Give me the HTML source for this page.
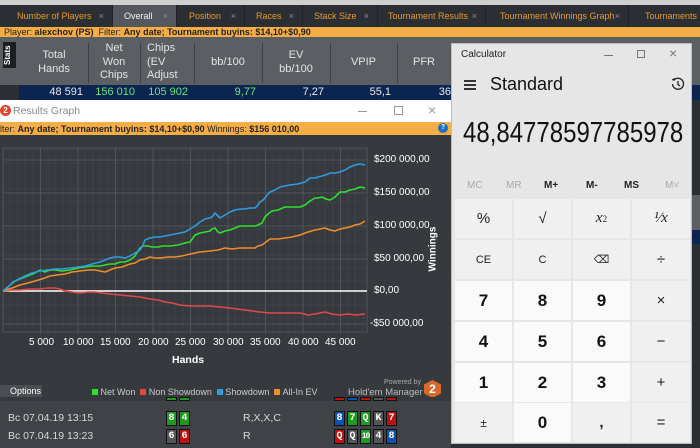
<!DOCTYPE html>
<html><head><meta charset="utf-8"><style>
*{margin:0;padding:0;box-sizing:border-box}
body{width:700px;height:448px;overflow:hidden;background:#2b2e33;font-family:"Liberation Sans",sans-serif;position:relative}
.abs{position:absolute}
.tab{position:absolute;top:5px;height:22px;color:#e59a2c;font-size:9px;line-height:22px;padding-left:12px;border-right:1px solid #1f2226;white-space:nowrap;overflow:hidden}
.tab i{font-style:normal;color:#8a8d91;position:absolute;right:8px}
.hd{position:absolute;top:42px;color:#e4e4e4;font-size:11px;text-align:center;line-height:13.5px}
.sep{position:absolute;top:43px;width:1px;height:40px;background:#3d4045}
.dv{position:absolute;top:86px;font-size:11px;color:#6be57a;text-align:right}
.yl{position:absolute;left:374px;color:#fff;font-size:10px}
.xl{position:absolute;top:337px;color:#fff;font-size:10px}
.card{position:absolute;width:11px;height:15px;font-size:10px;line-height:14px;text-align:center;color:#fff;font-family:"Liberation Mono",monospace;border:1px solid #111;font-weight:bold}
.row{position:absolute;left:8px;color:#d8d8d8;font-size:10.5px}
.k{position:absolute;height:39px;background:#f0f0f0;display:flex;align-items:center;justify-content:center;color:#222;font-size:15px}
.n{background:#fafafa;font-size:17px;font-weight:bold;color:#111}
.m{position:absolute;top:180px;font-size:10px;color:#222;font-weight:bold}
</style></head><body>
<div class="abs" style="left:0;top:0;width:700px;height:5px;background:#cfcfcf"></div>
<div class="abs" style="left:0;top:5px;width:700px;height:22px;background:#2b2e33"></div>
<div class="tab" style="left:0;width:113px;padding-left:17px">Number of Players<i>×</i></div>
<div class="tab" style="left:113px;width:64px;background:#54585d;color:#f0f0f0;padding-left:11px">Overall<i>×</i></div>
<div class="tab" style="left:177px;width:68px">Position<i>×</i></div>
<div class="tab" style="left:245px;width:58px;padding-left:11px">Races<i>×</i></div>
<div class="tab" style="left:303px;width:75px;padding-left:11px">Stack Size<i>×</i></div>
<div class="tab" style="left:378px;width:108px;padding-left:10px">Tournament Results<i>×</i></div>
<div class="tab" style="left:486px;width:143px;padding-left:14px">Tournament Winnings Graph<i>×</i></div>
<div class="tab" style="left:629px;width:80px;padding-left:16px">Tournaments</div>
<div class="abs" style="left:0;top:27px;width:700px;height:10px;background:#f5ad45"></div>
<div class="abs" style="left:4px;top:27px;font-size:9px;color:#222;line-height:10px">Player: <b>alexchov (PS)</b> &nbsp;Filter: <b>Any date; Tournament buyins: $14,10+$0,90</b></div>
<div class="abs" style="left:0;top:37px;width:700px;height:48px;background:#5b5f64"></div>
<div class="abs" style="left:3px;top:42px;width:13px;height:26px;background:#1c1e21;color:#fff;font-size:8px;writing-mode:vertical-rl;transform:rotate(180deg);text-align:center;font-weight:bold">Stats</div>
<div class="hd" style="left:20px;width:68px;top:49px">Total<br>Hands</div>
<div class="sep" style="left:88px"></div>
<div class="hd" style="left:88px;width:52px">Net<br>Won<br>Chips</div>
<div class="sep" style="left:140px"></div>
<div class="hd" style="left:140px;width:54px;text-align:left;padding-left:7px">Chips<br>(EV<br>Adjust</div>
<div class="sep" style="left:194px"></div>
<div class="hd" style="left:194px;width:68px;top:56px">bb/100</div>
<div class="sep" style="left:262px"></div>
<div class="hd" style="left:262px;width:68px;top:49px">EV<br>bb/100</div>
<div class="sep" style="left:330px"></div>
<div class="hd" style="left:330px;width:67px;top:56px">VPIP</div>
<div class="sep" style="left:397px"></div>
<div class="hd" style="left:397px;width:54px;top:56px">PFR</div>
<div class="abs" style="left:19px;top:85px;width:432px;height:15px;background:#0c2550"></div>
<div class="dv" style="left:20px;width:63px;color:#e8e8e8">48 591</div>
<div class="dv" style="left:88px;width:47px">156 010</div>
<div class="dv" style="left:140px;width:48px">105 902</div>
<div class="dv" style="left:194px;width:62px">9,77</div>
<div class="dv" style="left:262px;width:62px;color:#e8e8e8">7,27</div>
<div class="dv" style="left:330px;width:61px;color:#e8e8e8">55,1</div>
<div class="dv" style="left:397px;width:54px;color:#e8e8e8">36</div>
<div class="abs" style="left:692px;top:37px;width:8px;height:48px;background:#5b5f64"></div>
<div class="abs" style="left:692px;top:85px;width:8px;height:15px;background:#0c2550"></div>
<div class="abs" style="left:692px;top:195px;width:8px;height:35px;background:#5b5f64"></div>
<div class="abs" style="left:692px;top:230px;width:8px;height:14px;background:#0c2550"></div>
<div class="abs" style="left:0;top:100px;width:451px;height:22px;background:#fff"></div>
<div class="abs" style="left:0;top:105px;width:11px;height:11px;border-radius:50%;background:#e0452c;color:#fff;font-size:8px;text-align:center;line-height:11px;font-weight:bold">2</div>
<div class="abs" style="left:13px;top:105px;font-size:10.5px;color:#888">Results Graph</div>
<div class="abs" style="left:358px;top:111px;width:9px;height:1px;background:#999"></div>
<div class="abs" style="left:394px;top:106px;width:9px;height:9px;border:1px solid #999"></div>
<div class="abs" style="left:428px;top:102px;font-size:14px;color:#999">×</div>
<div class="abs" style="left:0;top:122px;width:451px;height:13px;background:#f5ad45"></div>
<div class="abs" style="left:0;top:124px;font-size:9px;color:#222">lter: <b>Any date; Tournament buyins: $14,10+$0,90</b> Winnings: <b>$156 010,00</b></div>
<div class="abs" style="left:438px;top:123px;width:10px;height:10px;border-radius:50%;background:#1e6fbf;color:#fff;font-size:7px;text-align:center;line-height:10px;font-weight:bold">?</div>
<div class="abs" style="left:0;top:135px;width:451px;height:262px;background:#36393e"></div>
<svg class="abs" style="left:0;top:135px" width="451" height="210" viewBox="0 135 451 210">
<g stroke="#454a50" stroke-width="0.6">
<path d="M3 150H367M3 163H367M3 176H367M3 189H367M3 202H367M3 216H367M3 229H367M3 242H367M3 255H367M3 268H367M3 281H367M3 305H367M3 318H367"/>
<path d="M10 148V332M18 148V332M25 148V332M33 148V332M48 148V332M55 148V332M63 148V332M70 148V332M85 148V332M93 148V332M100 148V332M108 148V332M123 148V332M130 148V332M138 148V332M145 148V332M160 148V332M168 148V332M175 148V332M183 148V332M198 148V332M205 148V332M213 148V332M220 148V332M235 148V332M243 148V332M250 148V332M258 148V332M273 148V332M280 148V332M288 148V332M295 148V332M310 148V332M318 148V332M325 148V332M333 148V332M348 148V332M355 148V332M363 148V332"/>
</g>
<g stroke="#50555b" stroke-width="1">
<path d="M3 160H367M3 193H367M3 226H367M3 259H367M3 324H367"/>
<path d="M40.5 148V334M78 148V334M115.5 148V334M153 148V334M190.5 148V334M228 148V334M265.5 148V334M303 148V334M340.5 148V334"/>
<rect x="3" y="148" width="364" height="184" fill="none"/>
</g>
<line x1="3" y1="291" x2="367" y2="291" stroke="#fff" stroke-width="1.5"/>
<g fill="none" stroke-width="1.6" stroke-linejoin="round">
<polyline stroke="#e04848" points="3,291 12,290 20,290 30,289 40,289 48,288 55,288 60,289 65,291 72,292 80,293 88,292 95,292 102,293 110,294 120,295 130,296 140,297 150,299 158,300 165,302 172,303 180,305 190,306 200,306 210,306 220,307 230,308 245,310 260,312 270,313 280,313 290,313 300,313 308,315 315,314 325,312 332,314 340,315 348,314 355,315 365,314"/>
<polyline stroke="#f08c2c" points="3,291 12,288 20,285 28,283 35,281 42,279 50,276 57,275 65,274 72,272 80,271 88,270 95,270 100,271 105,272 110,270 115,268 122,267 130,264 135,263 140,260 145,259 150,257 155,258 160,258 168,257 175,257 182,256 190,254 200,252 210,251 218,250 225,248 232,249 240,248 248,248 255,248 258,246 262,245 266,242 270,239 278,239 285,238 292,237 300,235 308,232 315,230 320,229 325,228 330,230 335,231 340,229 345,228 350,227 355,225 360,224 365,221"/>
<polyline stroke="#2ee02e" points="3,291 9,286 15,281 20,279 25,277 30,275 35,273 40,270 45,272 50,270 55,270 62,271 70,270 78,268 85,267 92,266 100,266 105,265 110,264 115,264 120,262 125,262 130,260 135,256 140,248 143,246 148,246 152,247 158,247 163,246 170,246 178,245 185,243 190,242 195,235 200,233 205,232 210,231 212,229 215,228 218,232 220,233 225,231 230,230 235,228 240,226 248,226 255,226 258,225 262,223 265,217 268,214 272,211 278,210 285,207 292,207 300,207 305,205 310,201 315,198 318,198 322,197 326,199 330,200 335,197 340,192 345,192 350,190 355,189 360,187 365,188"/>
<polyline stroke="#2f9ce0" points="3,291 8,287 13,282 19,279 25,276 32,273 40,271 47,270 55,269 62,269 70,268 78,267 85,266 92,264 100,262 105,260 110,258 115,257 120,257 125,258 130,256 135,253 140,250 143,245 145,240 150,238 155,237 160,237 165,236 170,235 175,234 180,233 185,232 190,229 195,226 200,222 205,219 210,218 212,217 215,213 218,216 220,218 225,215 230,212 235,210 240,209 245,209 250,208 255,208 258,205 260,202 263,200 265,198 268,194 270,192 275,190 280,187 285,186 290,185 298,184 305,182 310,178 315,178 318,177 322,176 325,175 328,174 330,173 335,173 340,172 345,170 350,167 355,165 360,164 365,165"/>
</g>
</svg>
<div class="yl" style="top:154px">$200 000,00</div>
<div class="yl" style="top:187px">$150 000,00</div>
<div class="yl" style="top:220px">$100 000,00</div>
<div class="yl" style="top:253px">$50 000,00</div>
<div class="yl" style="top:285px">$0,00</div>
<div class="yl" style="top:318px;left:370px">-$50 000,00</div>
<div class="abs" style="left:411px;top:244px;color:#fff;font-size:10px;font-weight:bold;transform:rotate(-90deg);transform-origin:center;width:44px;text-align:center">Winnings</div>
<div class="xl" style="left:29px">5 000</div>
<div class="xl" style="left:63px">10 000</div>
<div class="xl" style="left:100px">15 000</div>
<div class="xl" style="left:138px">20 000</div>
<div class="xl" style="left:175px">25 000</div>
<div class="xl" style="left:213px">30 000</div>
<div class="xl" style="left:250px">35 000</div>
<div class="xl" style="left:288px">40 000</div>
<div class="xl" style="left:325px">45 000</div>
<div class="abs" style="left:172px;top:354px;color:#fff;font-size:10.5px;font-weight:bold">Hands</div>
<div class="abs" style="left:0;top:385px;width:42px;height:13px;background:#4a4d52;color:#fff;font-size:9px;line-height:13px;padding-left:10px">Options</div>
<div class="abs" style="left:92px;top:387px;font-size:9px;color:#ccc;white-space:nowrap">
<span style="display:inline-block;width:6px;height:6px;background:#2ee02e"></span> Net Won &nbsp;<span style="display:inline-block;width:6px;height:6px;background:#e04848"></span> Non Showdown &nbsp;<span style="display:inline-block;width:6px;height:6px;background:#2f9ce0"></span> Showdown &nbsp;<span style="display:inline-block;width:6px;height:6px;background:#f08c2c"></span> All-In EV</div>
<div class="abs" style="left:384px;top:379px;font-size:7px;color:#aaa">Powered by</div>
<div class="abs" style="left:348px;top:387px;font-size:9.5px;color:#bbb">Hold'em Manager</div>
<div class="abs" style="left:424px;top:380px;width:17px;height:18px;background:#d8692c;clip-path:polygon(50% 0,100% 25%,100% 75%,50% 100%,0 75%,0 25%);color:#fff;font-size:12px;font-weight:bold;text-align:center;line-height:18px">2</div>
<div class="abs" style="left:0;top:397px;width:451px;height:51px;background:#3f4247"></div>
<div class="abs" style="left:0;top:397px;width:451px;height:4px;background:#36393e"></div>
<div class="row" style="top:412px">Bc 07.04.19 13:15</div>
<div class="row" style="top:430px">Bc 07.04.19 13:23</div>
<div class="row" style="top:412px;left:243px">R,X,X,C</div>
<div class="row" style="top:430px;left:243px">R</div>
<div class="card" style="left:166px;top:397px;height:4px;background:#1e9a1e"></div><div class="card" style="left:179px;top:397px;height:4px;background:#1e9a1e"></div>
<div class="card" style="left:334px;top:397px;height:4px;background:#c01010"></div><div class="card" style="left:347px;top:397px;height:4px;background:#1050b0"></div><div class="card" style="left:360px;top:397px;height:4px;background:#c01010"></div><div class="card" style="left:373px;top:397px;height:4px;background:#555"></div><div class="card" style="left:386px;top:397px;height:4px;background:#c01010"></div>
<div class="card" style="left:166px;top:411px;background:#1e9a1e">8</div><div class="card" style="left:179px;top:411px;background:#1e9a1e">4</div>
<div class="card" style="left:166px;top:429px;background:#555">6</div><div class="card" style="left:179px;top:429px;background:#c01010">6</div>
<div class="card" style="left:334px;top:411px;background:#1050b0">8</div><div class="card" style="left:347px;top:411px;background:#1e9a1e">7</div><div class="card" style="left:360px;top:411px;background:#1e9a1e">Q</div><div class="card" style="left:373px;top:411px;background:#555">K</div><div class="card" style="left:386px;top:411px;background:#c01010">7</div>
<div class="card" style="left:334px;top:429px;background:#c01010">Q</div><div class="card" style="left:347px;top:429px;background:#555">Q</div><div class="card" style="left:360px;top:429px;background:#1e9a1e;font-size:8px;letter-spacing:-1px">10</div><div class="card" style="left:373px;top:429px;background:#555">4</div><div class="card" style="left:386px;top:429px;background:#1050b0">8</div>
<div class="abs" style="left:451px;top:43px;width:241px;height:401px;background:#e6e6e6;border:1px solid #bdbdbd"></div>
<div class="abs" style="left:461px;top:49px;font-size:10px;color:#222">Calculator</div>
<div class="abs" style="left:604px;top:55px;width:9px;height:1px;background:#777"></div>
<div class="abs" style="left:637px;top:50px;width:8px;height:8px;border:1px solid #777"></div>
<div class="abs" style="left:669px;top:45px;font-size:14px;color:#777">×</div>
<div class="abs" style="left:464px;top:80px;width:12px;height:1.5px;background:#333;box-shadow:0 4px 0 #333,0 8px 0 #333"></div>
<div class="abs" style="left:490px;top:74px;font-size:18px;color:#111">Standard</div>
<svg class="abs" style="left:671px;top:77px" width="14" height="14" viewBox="0 0 14 14" fill="none" stroke="#222" stroke-width="1.3"><path d="M3 3A5.5 5.5 0 1 1 1.5 7"/><path d="M1 2.5L3 3L3.5 1"/><path d="M7 4V7.5L9 9"/></svg>
<div class="abs" style="left:463px;top:117px;font-size:24px;color:#111;transform:scaleY(1.2);transform-origin:left top;white-space:nowrap">48,84778597785978</div>
<div class="m" style="left:467px;color:#aaa;font-weight:normal">MC</div>
<div class="m" style="left:506px;color:#aaa;font-weight:normal">MR</div>
<div class="m" style="left:544px">M+</div>
<div class="m" style="left:586px">M-</div>
<div class="m" style="left:624px">MS</div>
<div class="m" style="left:665px;color:#aaa;font-weight:normal">M˅</div>
<div class="k" style="left:455px;top:199px;width:57px">%</div>
<div class="k" style="left:514px;top:199px;width:57px">√</div>
<div class="k" style="left:573px;top:199px;width:57px;font-family:'Liberation Serif',serif;font-style:italic">x<sup style="font-size:9px;font-style:normal">2</sup></div>
<div class="k" style="left:632px;top:199px;width:58px;font-family:'Liberation Serif',serif"><i>¹⁄x</i></div>
<div class="k" style="left:455px;top:240px;width:57px;font-size:11px">CE</div>
<div class="k" style="left:514px;top:240px;width:57px;font-size:11px">C</div>
<div class="k" style="left:573px;top:240px;width:57px;font-size:11px">⌫</div>
<div class="k" style="left:632px;top:240px;width:58px">÷</div>
<div class="k n" style="left:455px;top:281px;width:57px">7</div>
<div class="k n" style="left:514px;top:281px;width:57px">8</div>
<div class="k n" style="left:573px;top:281px;width:57px">9</div>
<div class="k" style="left:632px;top:281px;width:58px">×</div>
<div class="k n" style="left:455px;top:322px;width:57px">4</div>
<div class="k n" style="left:514px;top:322px;width:57px">5</div>
<div class="k n" style="left:573px;top:322px;width:57px">6</div>
<div class="k" style="left:632px;top:322px;width:58px">−</div>
<div class="k n" style="left:455px;top:363px;width:57px">1</div>
<div class="k n" style="left:514px;top:363px;width:57px">2</div>
<div class="k n" style="left:573px;top:363px;width:57px">3</div>
<div class="k" style="left:632px;top:363px;width:58px">+</div>
<div class="k" style="left:455px;top:403px;width:57px;font-size:12px">±</div>
<div class="k n" style="left:514px;top:403px;width:57px">0</div>
<div class="k" style="left:573px;top:403px;width:57px;font-weight:bold">,</div>
<div class="k" style="left:632px;top:403px;width:58px">=</div>
</body></html>
